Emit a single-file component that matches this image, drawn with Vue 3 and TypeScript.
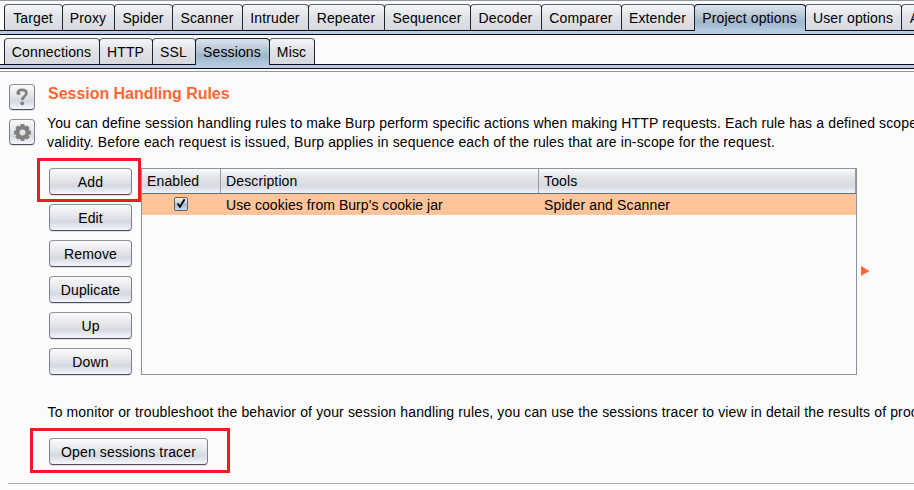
<script setup lang="ts">
interface Tab { label: string; width: number }

const mainTabs: Tab[] = [
  { label: 'Target', width: 58 },
  { label: 'Proxy', width: 52 },
  { label: 'Spider', width: 58 },
  { label: 'Scanner', width: 70 },
  { label: 'Intruder', width: 66 },
  { label: 'Repeater', width: 76 },
  { label: 'Sequencer', width: 86 },
  { label: 'Decoder', width: 71 },
  { label: 'Comparer', width: 80 },
  { label: 'Extender', width: 73 },
  { label: 'Project options', width: 111 },
  { label: 'User options', width: 96 },
  { label: 'Alerts', width: 54 },
]
const subTabs: Tab[] = [
  { label: 'Connections', width: 95 },
  { label: 'HTTP', width: 53 },
  { label: 'SSL', width: 43 },
  { label: 'Sessions', width: 74 },
  { label: 'Misc', width: 45 },
]
const rows = [
  { tabs: mainTabs, active: 'Project options' },
  { tabs: subTabs, active: 'Sessions' },
]
const actions = ['Add', 'Edit', 'Remove', 'Duplicate', 'Up', 'Down']
const teeth = [0, 45, 90, 135, 180, 225, 270, 315]
</script>

<template>
  <div class="window">
    <nav v-for="(row, i) in rows" :key="i" class="strip" :class="{ main: i === 0 }">
      <div class="tabs">
        <div
          v-for="tab in row.tabs"
          :key="tab.label"
          class="tab"
          :class="{ active: tab.label === row.active }"
          :style="{ width: tab.width + 1 + 'px' }"
        >{{ tab.label }}</div>
      </div>
      <div class="band"></div>
    </nav>
    <div class="edge"></div>

    <main class="panel">
      <aside class="side">
        <button class="icon" aria-label="Help">
          <svg width="24" height="24" viewBox="0 0 24 24">
            <path d="M7.8 8.4C7.6 5.6 9.4 4.9 12 4.9C15 4.9 16.4 6.2 16.4 8.2C16.4 11.3 12.4 11.2 12.3 15" fill="none" stroke="#808080" stroke-width="2.7" />
            <circle cx="8.5" cy="8.2" r="1.9" fill="#808080" />
            <circle cx="12.2" cy="18.3" r="1.9" fill="#808080" />
          </svg>
        </button>
        <button class="icon" aria-label="Settings">
          <svg width="24" height="24" viewBox="0 0 24 24">
            <circle cx="12.5" cy="12.5" r="5" fill="none" stroke="#808080" stroke-width="4" />
            <path v-for="a in teeth" :key="a" d="M10.5 7V4.1h4V7z" fill="#808080" :transform="`rotate(${a} 12.5 12.5)`" />
          </svg>
        </button>
      </aside>

      <section class="content">
        <h1>Session Handling Rules</h1>
        <p class="intro">
          <span>You can define session handling rules to make Burp perform specific actions when making HTTP requests. Each rule has a defined scope</span><br>
          <span>validity. Before each request is issued, Burp applies in sequence each of the rules that are in-scope for the request.</span>
        </p>
        <div class="rules">
          <div class="actions">
            <div v-for="a in actions" :key="a" class="action">
              <button class="btn">{{ a }}</button>
              <div v-if="a === 'Add'" class="mark"></div>
            </div>
          </div>
          <div class="table">
            <div class="head">
              <div>Enabled</div>
              <div>Description</div>
              <div>Tools</div>
            </div>
            <div class="row">
              <div class="check">
                <svg width="15" height="15" viewBox="0 0 15 15">
                  <defs>
                    <linearGradient id="box" x1="0" y1="0" x2="0" y2="1">
                      <stop offset="0" stop-color="#f1f5f9" />
                      <stop offset=".6" stop-color="#a9bdd0" />
                      <stop offset="1" stop-color="#d0e2f4" />
                    </linearGradient>
                  </defs>
                  <rect x=".5" y=".5" width="13" height="13" rx="1.5" fill="url(#box)" stroke="#536779" />
                  <path d="M3.7 6.5L6 9.8L10.6 2.2" fill="none" stroke="#000" stroke-width="1.8" />
                </svg>
              </div>
              <div class="desc">Use cookies from Burp's cookie jar</div>
              <div>Spider and Scanner</div>
            </div>
          </div>
          <svg class="arrow" width="9" height="10" viewBox="0 0 9 10"><path d="M0 0L8.5 5L0 10z" fill="#ff6633" /></svg>
        </div>
        <p class="note">To monitor or troubleshoot the behavior of your session handling rules, you can use the sessions tracer to view in detail the results of proc</p>
        <div class="trace">
          <button class="btn">Open sessions tracer</button>
          <div class="mark"></div>
        </div>
      </section>
    </main>
    <div class="rule"></div>
  </div>
</template>

<style>
body { background: #fbfbfb; overflow: hidden; }
</style>
<style scoped>
* { box-sizing: border-box; }
.window {
  width: 914px; height: 490px; overflow: hidden; background: #fbfbfb; color: #000;
  font: 14px/19px "Liberation Sans", Arial, sans-serif; letter-spacing: .13px; white-space: nowrap;
}
.strip { height: 34px; padding-top: 3px; }
.strip.main { height: 35px; border-top: 1px solid #9297a1; }
.tabs { display: flex; height: 27px; padding-left: 4px; position: relative; z-index: 1; }
.tab {
  flex: none; height: 26px; margin-right: -1px; padding: 4px 1px 0 0; text-align: center;
  border: 1px solid #5c606b; border-right-color: #222433; border-left-color: #222433; border-bottom: 0;
  border-radius: 4px 4px 0 0; background: linear-gradient(#f5f6f8, #e2e3e8 45%, #d8d9df);
}
.tab.active {
  position: relative; height: 27px; border-color: #17202f;
  background: linear-gradient(#dce5ed, #b6c7d6 42%, #9fb6ca 65%, #b4cadf);
}
.band { height: 5px; margin-top: -1px; background: #b9cbdf; border: solid #080a20; border-width: 1px 0; }
.edge { height: 3px; border-bottom: 1px solid #9297a1; }
.panel { display: flex; height: 411px; }
.side { width: 48px; padding: 12px 0 0 9px; display: flex; flex-direction: column; gap: 9px; }
button { font: inherit; letter-spacing: inherit; color: inherit; padding: 0; }
.icon, .btn {
  display: block; border: 1px solid #7c8089; border-top-color: #8e929a; border-bottom-color: #4b4e58; border-radius: 4px;
  background: linear-gradient(#fbfbfc, #e5e6ea 45%, #d5d8e0 67%, #f4f7ff);
  box-shadow: 0 1px 0 #dedfe2;
}
.icon { width: 26px; height: 26px; }
.icon svg { display: block; }
.content { flex: 1; min-width: 0; padding-top: 12px; }
h1 { margin: 0; font-size: 16px; line-height: 19px; font-weight: bold; color: #ff6633; letter-spacing: -.03px; }
.intro { margin: 11px 0 0 -1px; height: 38px; }
.rules { display: flex; align-items: flex-start; margin-top: 16px; height: 207px; }
.actions { width: 93px; padding-left: 1px; display: flex; flex-direction: column; gap: 9px; }
.action, .trace { position: relative; }
.btn { width: 83px; height: 27px; padding-top: 2px; }
.mark { position: absolute; border: 3px solid #ed1c24; pointer-events: none; }
.action .mark { left: -12px; top: -10px; width: 104px; height: 44px; }
.table { width: 716px; height: 207px; border: 1px solid #8e919e; }
.head, .row { display: grid; grid-template-columns: 79px 318px 317px; }
.head { height: 25px; line-height: 25px; border-bottom: 1px solid #6c707d; background: linear-gradient(#fafbfc, #e3e4e8 35%, #d7dae1 72%, #f0f3fb); }
.head div { height: 24px; padding-left: 5px; border-right: 1px solid #969ba5; }
.row { height: 21px; line-height: 22px; background: #ffc499; }
.row div { padding-left: 5px; }
.row .check { padding: 3px 0 0 32px; }
.desc { letter-spacing: .05px; }
.check svg { display: block; }
.arrow { margin: 98px 0 0 4px; }
.note { margin: 28px 0 0 -.5px; }
.trace { margin: 16px 0 0 1px; }
.trace .btn { width: 159px; }
.trace .mark { left: -19px; top: -10px; width: 200px; height: 45px; }
.rule { height: 1px; margin-left: 8px; background: #aaaab5; }
</style>
